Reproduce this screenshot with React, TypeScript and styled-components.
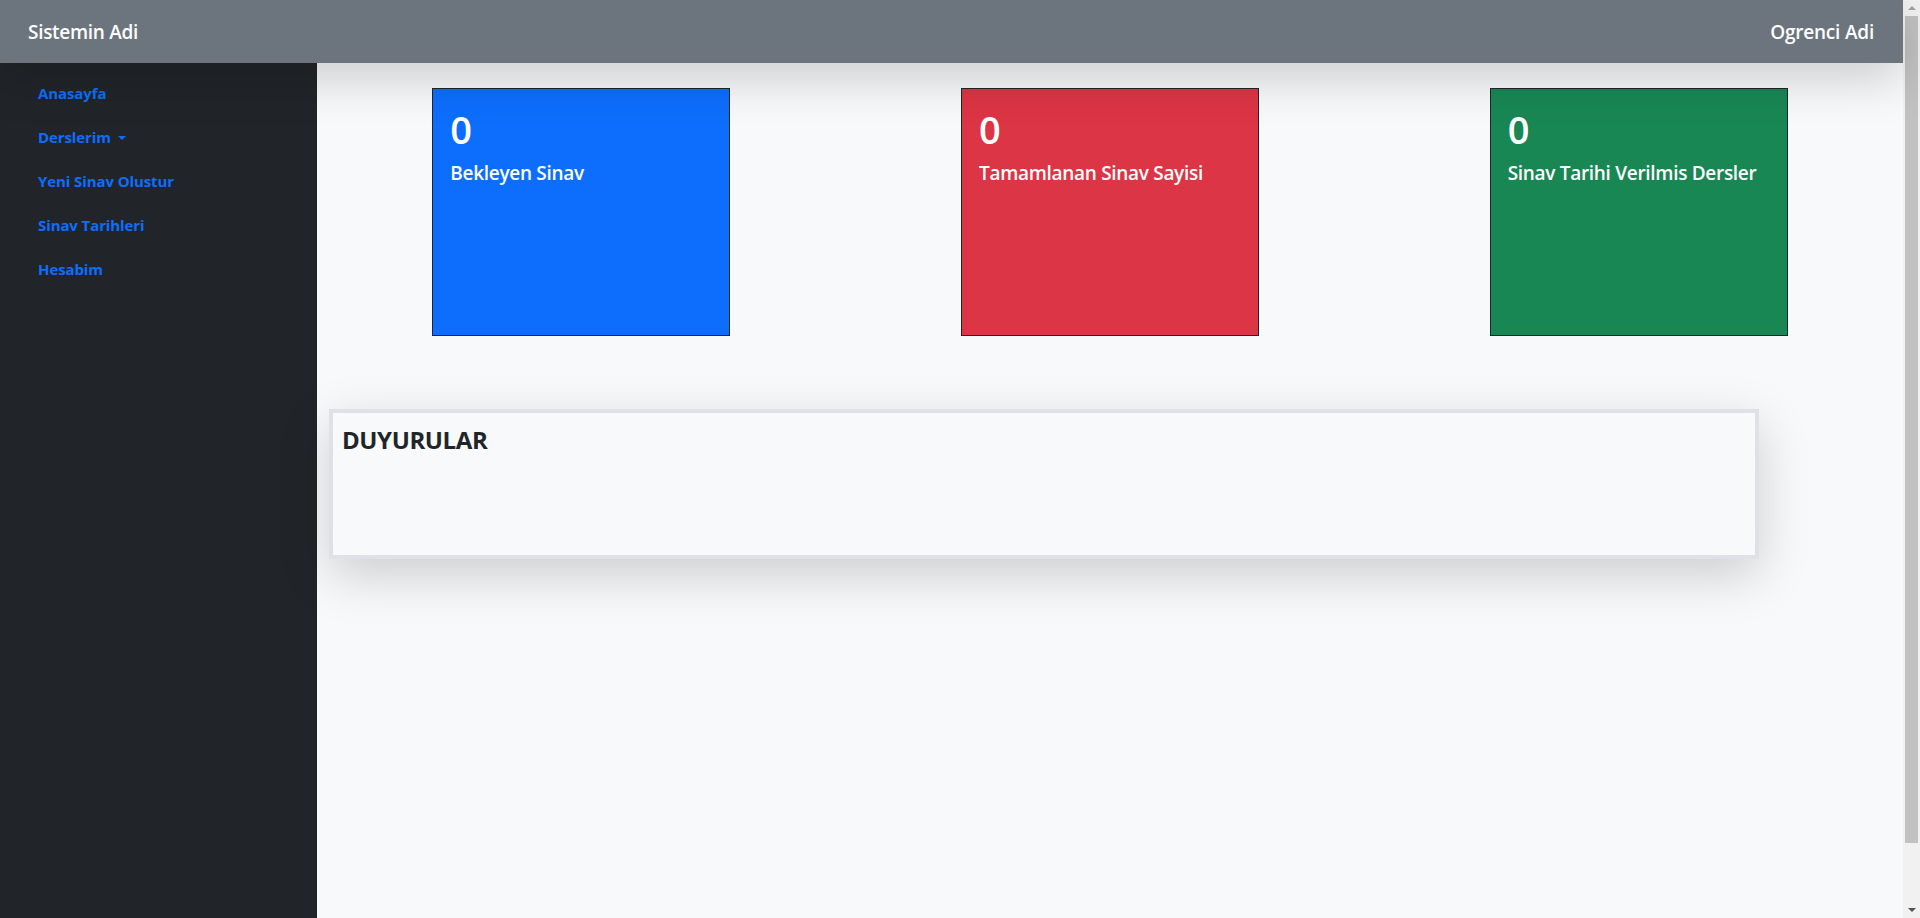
import React from "react";
import styled, { createGlobalStyle } from "styled-components";

const GlobalStyle = createGlobalStyle`
  * { box-sizing: border-box; }
  html, body { margin: 0; padding: 0; }
  body {
    background: #f8f9fa;
    color: #212529;
    font-family: "Open Sans", "Noto Sans", "Liberation Sans", sans-serif;
  }
`;

const Shell = styled.div`
  display: flex;
  align-items: flex-start;
`;

const Page = styled.div`
  flex: 1;
  min-width: 0;
`;

const ScrollTrack = styled.div`
  position: sticky;
  top: 0;
  width: 17px;
  height: 100vh;
  flex-shrink: 0;
  background: #f1f1f1;
  display: flex;
  flex-direction: column;
`;

const ScrollArrow = styled.div<{ $dir: "up" | "down"; $color: string }>`
  height: 16px;
  display: flex;
  align-items: center;
  justify-content: center;
  &::before {
    content: "";
    width: 0;
    height: 0;
    border-left: 4px solid transparent;
    border-right: 4px solid transparent;
    ${(p) =>
      p.$dir === "up"
        ? `border-bottom: 4px solid ${p.$color};`
        : `border-top: 4px solid ${p.$color};`}
  }
`;

const ScrollThumb = styled.div`
  margin: 0 2px;
  height: 827px;
  background: #c1c1c1;
`;

const ScrollSpacer = styled.div`
  flex: 1;
`;

const Navbar = styled.header`
  position: relative;
  z-index: 2;
  height: 63px;
  background: #6c757d;
  display: flex;
  align-items: center;
  justify-content: space-between;
  padding: 0 29px 0 28px;
  box-shadow: 0 1rem 3rem rgba(0, 0, 0, 0.175);
`;

const Brand = styled.span`
  color: #fff;
  font-size: 19px;
  font-weight: 600;
  letter-spacing: -0.3px;
`;

const UserName = styled.span`
  color: #fff;
  font-size: 19px;
  font-weight: 600;
  letter-spacing: -0.2px;
`;

const Body = styled.div`
  display: flex;
`;

const Sidebar = styled.nav`
  width: 317px;
  flex-shrink: 0;
  min-height: 100vh;
  background: #212529;
  padding: 8px 0 0 38px;
  display: flex;
  flex-direction: column;
`;

const NavLink = styled.a`
  display: flex;
  align-items: center;
  gap: 7px;
  height: 44px;
  color: #0d6efd;
  font-size: 15px;
  font-weight: 700;
  letter-spacing: -0.1px;
  text-decoration: none;
  cursor: pointer;
`;

const Caret = styled.span`
  display: inline-block;
  width: 0;
  height: 0;
  border-left: 4px solid transparent;
  border-right: 4px solid transparent;
  border-top: 4px solid #0d6efd;
  margin-top: 1px;
`;

const Main = styled.main`
  flex: 1;
  padding: 25px 12px 0 12px;
`;

const CardRow = styled.div`
  display: grid;
  grid-template-columns: repeat(3, 1fr);
  margin: 0 -12px;
`;

const CardCell = styled.div`
  display: flex;
  justify-content: center;
`;

const StatCard = styled.div<{ $bg: string }>`
  width: 298px;
  height: 248px;
  background: ${(p) => p.$bg};
  border: 1px solid #212529;
  padding: 16px 17px;
  color: #fff;
`;

const StatNumber = styled.div`
  font-size: 38px;
  font-weight: 600;
  line-height: 48px;
  margin-bottom: 8px;
`;

const StatLabel = styled.div`
  font-size: 19px;
  font-weight: 600;
  line-height: 24px;
  letter-spacing: -0.3px;
`;

const Announcements = styled.section`
  margin-top: 73px;
  width: calc(100% * 11 / 12 - 2px);
  height: 150px;
  border: 4px solid #dee2e6;
  background: #f8f9fa;
  box-shadow: 0 1rem 3rem rgba(0, 0, 0, 0.175);
  padding: 13px 9px;
`;

const AnnTitle = styled.h3`
  margin: 0;
  font-size: 24px;
  font-weight: 700;
  line-height: 1.2;
  letter-spacing: -0.4px;
  color: #212529;
`;

const cards = [
  { bg: "#0d6efd", value: 0, label: "Bekleyen Sinav" },
  { bg: "#dc3545", value: 0, label: "Tamamlanan Sinav Sayisi" },
  { bg: "#198754", value: 0, label: "Sinav Tarihi Verilmis Dersler" },
];

export default function App() {
  return (
    <>
      <GlobalStyle />
      <Shell>
        <Page>
          <Navbar>
            <Brand>Sistemin Adi</Brand>
            <UserName>Ogrenci Adi</UserName>
          </Navbar>
          <Body>
            <Sidebar>
              <NavLink>Anasayfa</NavLink>
              <NavLink>
                Derslerim <Caret />
              </NavLink>
              <NavLink>Yeni Sinav Olustur</NavLink>
              <NavLink>Sinav Tarihleri</NavLink>
              <NavLink>Hesabim</NavLink>
            </Sidebar>
            <Main>
              <CardRow>
                {cards.map((c) => (
                  <CardCell key={c.label}>
                    <StatCard $bg={c.bg}>
                      <StatNumber>{c.value}</StatNumber>
                      <StatLabel>{c.label}</StatLabel>
                    </StatCard>
                  </CardCell>
                ))}
              </CardRow>
              <Announcements>
                <AnnTitle>DUYURULAR</AnnTitle>
              </Announcements>
            </Main>
          </Body>
        </Page>
        <ScrollTrack aria-hidden>
          <ScrollArrow $dir="up" $color="#a3a3a3" />
          <ScrollThumb />
          <ScrollSpacer />
          <ScrollArrow $dir="down" $color="#505050" />
        </ScrollTrack>
      </Shell>
    </>
  );
}
